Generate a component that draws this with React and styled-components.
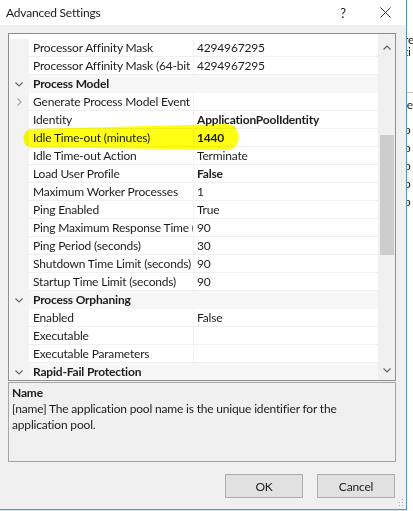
import React from "react";
import styled, { createGlobalStyle } from "styled-components";

const GlobalStyle = createGlobalStyle`
  html, body {
    margin: 0;
    padding: 0;
  }
  body {
    width: 413px;
    height: 511px;
    overflow: hidden;
    background: #ffffff;
    font-family: Lato, "Noto Sans", sans-serif;
    font-size: 12px;
    letter-spacing: -0.18px;
    color: #1c1c1c;
  }
`;

const rows = [
  { name: "Processor Affinity Mask", value: "4294967295" },
  { name: "Processor Affinity Mask (64-bit option)", value: "4294967295" },
  { category: "Process Model" },
  { name: "Generate Process Model Event Log Entry", value: "", expandable: true },
  { name: "Identity", value: "ApplicationPoolIdentity", bold: true },
  { name: "Idle Time-out (minutes)", value: "1440", bold: true },
  { name: "Idle Time-out Action", value: "Terminate" },
  { name: "Load User Profile", value: "False", bold: true },
  { name: "Maximum Worker Processes", value: "1" },
  { name: "Ping Enabled", value: "True" },
  { name: "Ping Maximum Response Time (seconds)", value: "90" },
  { name: "Ping Period (seconds)", value: "30" },
  { name: "Shutdown Time Limit (seconds)", value: "90" },
  { name: "Startup Time Limit (seconds)", value: "90" },
  { category: "Process Orphaning" },
  { name: "Enabled", value: "False" },
  { name: "Executable", value: "" },
  { name: "Executable Parameters", value: "" },
  { category: "Rapid-Fail Protection" },
];

const Screen = styled.div`
  display: flex;
  width: 413px;
  height: 511px;
`;

const Dialog = styled.div`
  position: relative;
  width: 406px;
  height: 509px;
  display: flex;
  flex-direction: column;
  background: #f0f0f0;
  border-right: 1px solid #5796b8;
  border-bottom: 1px solid #5796b8;
  box-shadow: 0 1px 0 #cfe6f2;
`;

const TitleBar = styled.div`
  height: 25px;
  display: flex;
  align-items: center;
  background: #ffffff;
  padding-left: 6px;
`;

const Title = styled.div`
  flex: 1;
  font-size: 12px;
  color: #1a1a1a;
`;

const TitleButton = styled.div`
  width: 42px;
  height: 25px;
  display: flex;
  align-items: center;
  justify-content: center;
  font-size: 13px;
  color: #222;
`;

const Body = styled.div`
  flex: 1;
  display: flex;
  flex-direction: column;
  padding: 8px 10px 0 8px;
`;

const Grid = styled.div`
  position: relative;
  height: 346px;
  display: flex;
  background: #ffffff;
  border: 1px solid #8c8f94;
  overflow: hidden;
`;

const List = styled.div`
  flex: 1;
  padding-top: 5px;
  overflow: hidden;
`;

const Row = styled.div`
  display: flex;
  height: 18px;
  background: ${(p) => (p.$category ? "#f7f7f7" : "#ffffff")};
`;

const Gutter = styled.div`
  width: 20px;
  flex: none;
  display: flex;
  align-items: center;
  justify-content: center;
  background: #f3f3f3;
`;

const NameCell = styled.div`
  width: 160px;
  flex: none;
  padding-left: 4px;
  line-height: 17px;
  white-space: nowrap;
  overflow: hidden;
  border-bottom: 1px solid #f0f0f0;
  border-right: 1px solid #f3f3f3;
`;

const ValueCell = styled.div`
  flex: 1;
  padding-left: 3px;
  line-height: 17px;
  white-space: nowrap;
  overflow: hidden;
  font-weight: ${(p) => (p.$bold ? 700 : 400)};
  border-bottom: 1px solid #f0f0f0;
`;

const CategoryCell = styled.div`
  flex: 1;
  padding-left: 4px;
  line-height: 18px;
  font-weight: 700;
  white-space: nowrap;
`;

const Scrollbar = styled.div`
  width: 17px;
  flex: none;
  display: flex;
  flex-direction: column;
  background: #f0f0f0;
`;

const ArrowButton = styled.div`
  height: ${(p) => p.$h}px;
  display: flex;
  align-items: center;
  justify-content: center;
`;

const Track = styled.div`
  flex: 1;
  padding: 75px 1px 0 2px;
`;

const Thumb = styled.div`
  height: 120px;
  background: #cdcdcd;
`;

const Highlight = styled.svg`
  position: absolute;
  left: 0;
  top: 0;
  width: 100%;
  height: 100%;
  pointer-events: none;
  mix-blend-mode: multiply;
`;

const Description = styled.div`
  margin-top: 1px;
  height: 74px;
  padding: 2px 3px;
  border: 1px solid #a5a5a5;
  line-height: 16px;
  color: #1c1c1c;
`;

const DescTitle = styled.div`
  font-weight: 700;
`;

const ButtonRow = styled.div`
  display: flex;
  justify-content: flex-end;
  gap: 14px;
  margin-top: 12px;
  margin-right: 1px;
`;

const Button = styled.div`
  width: 76px;
  height: 22px;
  display: flex;
  align-items: center;
  justify-content: center;
  background: #e1e1e1;
  border: 1px solid #adadad;
  color: #1c1c1c;
`;

const Grip = styled.svg`
  position: absolute;
  right: 2px;
  bottom: 2px;
`;

const BackStrip = styled.div`
  width: 6px;
  background: #ffffff;
  overflow: hidden;
  padding-top: 34px;
  font-size: 12px;
  color: #222;
`;

const StripLine = styled.div`
  height: ${(p) => p.$h || 12}px;
  line-height: ${(p) => p.$h || 12}px;
  margin-left: -3px;
  white-space: nowrap;
  overflow: hidden;
  border-bottom: ${(p) => (p.$rule ? "1px solid #b9c4cc" : "none")};
`;

function ChevronDown({ color = "#555" }) {
  return (
    <svg width="8" height="5" viewBox="0 0 8 5">
      <polyline points="0.5,0.5 4,4 7.5,0.5" fill="none" stroke={color} strokeWidth="1.2" />
    </svg>
  );
}

function ChevronUp({ color = "#555" }) {
  return (
    <svg width="8" height="5" viewBox="0 0 8 5">
      <polyline points="0.5,4.5 4,1 7.5,4.5" fill="none" stroke={color} strokeWidth="1.2" />
    </svg>
  );
}

function ChevronRight() {
  return (
    <svg width="5" height="8" viewBox="0 0 5 8">
      <polyline points="0.5,0.5 4,4 0.5,7.5" fill="none" stroke="#a0a0a0" strokeWidth="1.1" />
    </svg>
  );
}

function CloseIcon() {
  return (
    <svg width="11" height="11" viewBox="0 0 11 11">
      <path d="M0.5 0.5 L10.5 10.5 M10.5 0.5 L0.5 10.5" stroke="#333" strokeWidth="1" />
    </svg>
  );
}

export default function App() {
  return (
    <>
      <GlobalStyle />
      <Screen>
        <Dialog>
          <TitleBar>
            <Title>Advanced Settings</Title>
            <TitleButton>?</TitleButton>
            <TitleButton>
              <CloseIcon />
            </TitleButton>
          </TitleBar>
          <Body>
            <Grid>
              <List>
                {rows.map((r, i) =>
                  r.category ? (
                    <Row key={i} $category>
                      <Gutter>
                        <ChevronDown color="#666" />
                      </Gutter>
                      <CategoryCell>{r.category}</CategoryCell>
                    </Row>
                  ) : (
                    <Row key={i}>
                      <Gutter>{r.expandable && <ChevronRight />}</Gutter>
                      <NameCell>{r.name}</NameCell>
                      <ValueCell $bold={r.bold}>{r.value}</ValueCell>
                    </Row>
                  )
                )}
              </List>
              <Scrollbar>
                <ArrowButton $h={26}>
                  <ChevronUp color="#606060" />
                </ArrowButton>
                <Track>
                  <Thumb />
                </Track>
                <ArrowButton $h={20}>
                  <ChevronDown color="#606060" />
                </ArrowButton>
              </Scrollbar>
              <Highlight viewBox="0 0 386 346" preserveAspectRatio="none">
                <path
                  d="M 21 95 C 13 96, 12 113, 21 113 L 217 116 C 234 116, 234 89, 217 90 Z"
                  fill="#ffff14"
                />
              </Highlight>
            </Grid>
            <Description>
              <DescTitle>Name</DescTitle>
              <div>
                [name] The application pool name is the unique identifier for the application pool.
              </div>
            </Description>
            <ButtonRow>
              <Button>OK</Button>
              <Button>Cancel</Button>
            </ButtonRow>
          </Body>
          <Grip width="6" height="8" viewBox="0 0 6 8">
            <rect x="4" y="0" width="1" height="1" fill="#a8a8a8" />
            <rect x="4" y="3" width="1" height="1" fill="#a8a8a8" />
            <rect x="1" y="3" width="1" height="1" fill="#a8a8a8" />
            <rect x="4" y="6" width="1" height="1" fill="#a8a8a8" />
            <rect x="1" y="6" width="1" height="1" fill="#a8a8a8" />
          </Grip>
        </Dialog>
        <BackStrip>
          <StripLine>re</StripLine>
          <StripLine>ti</StripLine>
          <StripLine $h={34} $rule />
          <StripLine $h={24}>le</StripLine>
          <StripLine $h={4} />
          <StripLine $h={18}>p</StripLine>
          <StripLine $h={18}>p</StripLine>
          <StripLine $h={18}>p</StripLine>
          <StripLine $h={18}>p</StripLine>
          <StripLine $h={18}>p</StripLine>
        </BackStrip>
      </Screen>
    </>
  );
}
